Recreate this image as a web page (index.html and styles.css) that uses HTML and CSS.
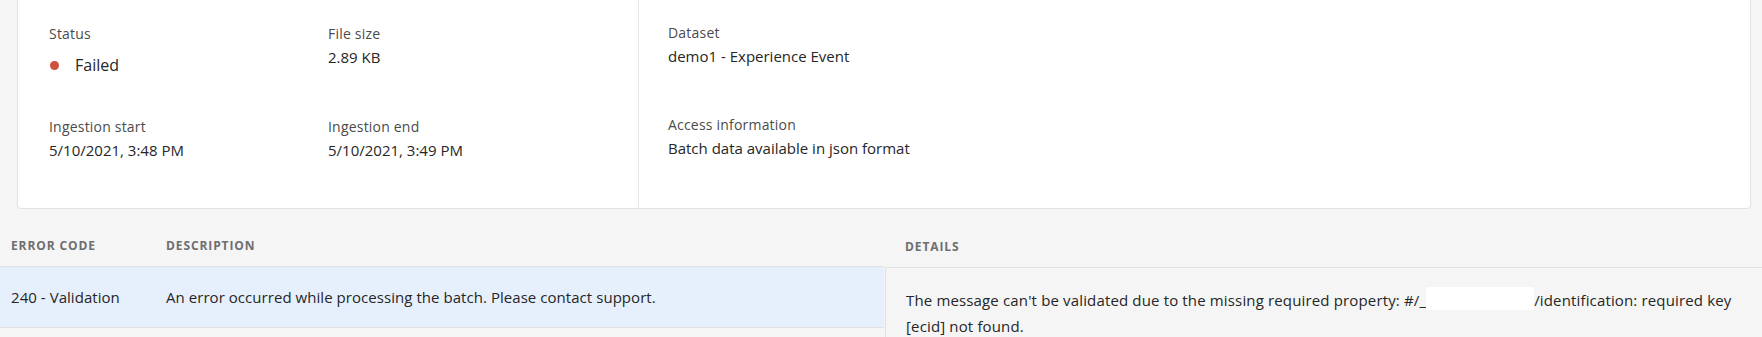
FILE: index.html
```html
<!DOCTYPE html>
<html lang="en">
<head>
    <meta charset="UTF-8">
    <meta name="viewport" content="width=device-width, initial-scale=1.0">
    <title>Batch overview</title>
    <link rel="stylesheet" href="styles.css">
</head>
<body>
    <div class="card">
        <div class="card-left">
            <div class="field">
                <div class="label">Status</div>
                <div class="status">
                    <span class="status-dot"></span>
                    <span>Failed</span>
                </div>
            </div>
            <div class="field">
                <div class="label">File size</div>
                <div class="value">2.89 KB</div>
            </div>
            <div class="field">
                <div class="label">Ingestion start</div>
                <div class="value">5/10/2021, 3:48 PM</div>
            </div>
            <div class="field">
                <div class="label">Ingestion end</div>
                <div class="value">5/10/2021, 3:49 PM</div>
            </div>
        </div>
        <div class="card-right">
            <div class="field">
                <div class="label">Dataset</div>
                <div class="value">demo1 - Experience Event</div>
            </div>
            <div class="field">
                <div class="label">Access information</div>
                <div class="value">Batch data available in json format</div>
            </div>
        </div>
    </div>

    <div class="errors">
        <div class="error-table">
            <div class="table-head">
                <div class="col-code">Error code</div>
                <div class="col-desc">Description</div>
            </div>
            <div class="table-row selected">
                <div class="col-code">240 - Validation</div>
                <div class="col-desc">An error occurred while processing the batch. Please contact support.</div>
            </div>
        </div>
        <div class="details">
            <div class="details-head"><span>Details</span></div>
            <p class="details-body">The message can't be validated due to the missing required property: #/_<span class="redacted"></span>/identification: required key [ecid] not found.</p>
        </div>
    </div>
</body>
</html>
```

FILE: styles.css
```css
body {
    font-family: 'Open Sans', sans-serif;
    margin: 0;
    padding: 0;
    background: #f5f5f5;
    color: #262626;
}
.card {
    display: flex;
    height: 208px;
    margin: 0 11px 0 17px;
    background: #fff;
    border: 1px solid #e3e3e3;
    border-top: none;
    border-radius: 0 0 4px 4px;
}
.card-left {
    width: 589px;
    padding: 24px 0 0 31px;
    border-right: 1px solid #e6e6e6;
    display: grid;
    grid-template-columns: 279px 1fr;
    grid-template-rows: 93px auto;
}
.card-right {
    flex: 1;
    padding: 23px 0 0 29px;
    display: grid;
    grid-template-rows: 92px auto;
}
.label {
    font-size: 14px;
    line-height: 20px;
    color: #4b4b4b;
    letter-spacing: 0.2px;
}
.value {
    margin-top: 2px;
    font-size: 15px;
    line-height: 22px;
}
.status {
    margin-top: 10px;
    display: flex;
    align-items: center;
    font-size: 16px;
    line-height: 22px;
}
.status-dot {
    width: 9px;
    height: 9px;
    border-radius: 50%;
    background: #d0503f;
    margin: 0 16px 0 1px;
}
.errors {
    display: flex;
}
.error-table {
    width: 884px;
    margin-right: 1px;
}
.table-head,
.details-head {
    font-size: 12px;
    line-height: 16px;
    font-weight: 700;
    text-transform: uppercase;
    letter-spacing: 0.9px;
    color: #6e6e6e;
}
.table-head {
    display: flex;
    padding: 29px 0 12px;
    border-bottom: 1px solid #e1e1e1;
}
.table-row {
    display: flex;
    padding: 19px 0;
    font-size: 15px;
    line-height: 22px;
    letter-spacing: 0.05px;
    border-bottom: 1px solid #e1e1e1;
}
.table-row.selected {
    background: #e6f0fc;
}
.col-code {
    width: 155px;
    padding-left: 11px;
}
.col-desc {
    flex: 1;
}
.details {
    flex: 1;
}
.details-head {
    padding: 30px 0 12px 20px;
    border-bottom: 1px solid #e1e1e1;
}
.details-body {
    margin: 0;
    padding: 19px 20px 8px 20px;
    border-left: 1px solid #e1e1e1;
    font-size: 15px;
    line-height: 26px;
    letter-spacing: 0.15px;
}
.redacted {
    display: inline-block;
    width: 108px;
    height: 23px;
    vertical-align: top;
    background: #fff;
}
```
